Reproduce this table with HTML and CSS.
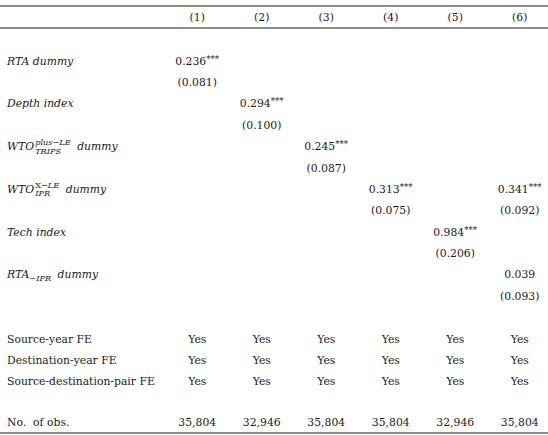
FILE: index.html
```html
<!DOCTYPE html>
<html lang="en">
<head>
    <meta charset="UTF-8">
    <meta name="viewport" content="width=device-width, initial-scale=1.0">
    <title>Regression results</title>
    <link rel="stylesheet" href="styles.css">
</head>
<body>
    <table class="reg">
        <colgroup>
            <col class="c-label">
            <col class="c-num"><col class="c-num"><col class="c-num">
            <col class="c-num"><col class="c-num"><col class="c-num">
        </colgroup>
        <thead>
            <tr>
                <th></th>
                <th>(1)</th><th>(2)</th><th>(3)</th><th>(4)</th><th>(5)</th><th>(6)</th>
            </tr>
        </thead>
        <tbody>
            <tr class="blank"><td colspan="7"></td></tr>
            <tr>
                <td class="lbl"><i>RTA dummy</i></td>
                <td>0.236<sup>***</sup></td><td></td><td></td><td></td><td></td><td></td>
            </tr>
            <tr>
                <td></td><td>(0.081)</td><td></td><td></td><td></td><td></td><td></td>
            </tr>
            <tr>
                <td class="lbl"><i>Depth index</i></td>
                <td></td><td>0.294<sup>***</sup></td><td></td><td></td><td></td><td></td>
            </tr>
            <tr>
                <td></td><td></td><td>(0.100)</td><td></td><td></td><td></td><td></td>
            </tr>
            <tr>
                <td class="lbl"><i>WTO</i><span class="scr"><span class="up">plus−LE</span><span class="dn">TRIPS</span></span> <i>dummy</i></td>
                <td></td><td></td><td>0.245<sup>***</sup></td><td></td><td></td><td></td>
            </tr>
            <tr>
                <td></td><td></td><td></td><td>(0.087)</td><td></td><td></td><td></td>
            </tr>
            <tr>
                <td class="lbl"><i>WTO</i><span class="scr"><span class="up"><span class="rm">X</span>−LE</span><span class="dn">IPR</span></span> <i>dummy</i></td>
                <td></td><td></td><td></td><td>0.313<sup>***</sup></td><td></td><td>0.341<sup>***</sup></td>
            </tr>
            <tr>
                <td></td><td></td><td></td><td></td><td>(0.075)</td><td></td><td>(0.092)</td>
            </tr>
            <tr>
                <td class="lbl"><i>Tech index</i></td>
                <td></td><td></td><td></td><td></td><td>0.984<sup>***</sup></td><td></td>
            </tr>
            <tr>
                <td></td><td></td><td></td><td></td><td></td><td>(0.206)</td><td></td>
            </tr>
            <tr>
                <td class="lbl"><i>RTA</i><sub class="low">−IPR</sub> <i>dummy</i></td>
                <td></td><td></td><td></td><td></td><td></td><td>0.039</td>
            </tr>
            <tr>
                <td></td><td></td><td></td><td></td><td></td><td></td><td>(0.093)</td>
            </tr>
            <tr class="blank"><td colspan="7"></td></tr>
            <tr>
                <td class="lbl">Source-year FE</td>
                <td>Yes</td><td>Yes</td><td>Yes</td><td>Yes</td><td>Yes</td><td>Yes</td>
            </tr>
            <tr>
                <td class="lbl">Destination-year FE</td>
                <td>Yes</td><td>Yes</td><td>Yes</td><td>Yes</td><td>Yes</td><td>Yes</td>
            </tr>
            <tr>
                <td class="lbl">Source-destination-pair FE</td>
                <td>Yes</td><td>Yes</td><td>Yes</td><td>Yes</td><td>Yes</td><td>Yes</td>
            </tr>
            <tr class="blank"><td colspan="7"></td></tr>
            <tr class="last">
                <td class="lbl">No.&nbsp; of obs.</td>
                <td>35,804</td><td>32,946</td><td>35,804</td><td>35,804</td><td>32,946</td><td>35,804</td>
            </tr>
        </tbody>
    </table>
</body>
</html>
```

FILE: styles.css
```css
html, body {
    margin: 0;
    background: #fff;
    overflow: hidden;
}
body {
    padding-top: 5px;
    font-family: "DejaVu Serif", "Liberation Serif", serif;
    font-size: 10.8px;
    color: #1a1a1a;
}

.reg {
    border-collapse: collapse;
    table-layout: fixed;
    width: 552px;
}
.c-label { width: 165px; }
.c-num { width: 64.5px; }

.reg thead tr {
    border-top: 2px solid #8c8c8c;
    border-bottom: 2px solid #8c8c8c;
}
.reg th {
    font-weight: normal;
    height: 20px;
    padding: 0;
    text-align: center;
}
.reg td {
    height: 21.4px;
    padding: 0;
    text-align: center;
    white-space: nowrap;
}
.reg tr.last td {
    height: 17px;
    padding-bottom: 1px;
}
.reg tr.last {
    border-bottom: 2px solid #8c8c8c;
}
.reg td.lbl {
    text-align: left;
    padding-left: 7px;
}

sup {
    font-size: 0.8em;
    vertical-align: 0.4em;
    line-height: 0;
}

.scr {
    display: inline-block;
    vertical-align: -0.45em;
    font-style: italic;
    font-size: 0.76em;
    line-height: 1.05;
    margin-left: 1px;
    margin-right: 3px;
}
.scr .up, .scr .dn { display: block; }
.scr .rm { font-style: normal; }
.low {
    font-style: italic;
    font-size: 0.76em;
    vertical-align: -0.35em;
    line-height: 0;
    margin-right: 3px;
}
```
